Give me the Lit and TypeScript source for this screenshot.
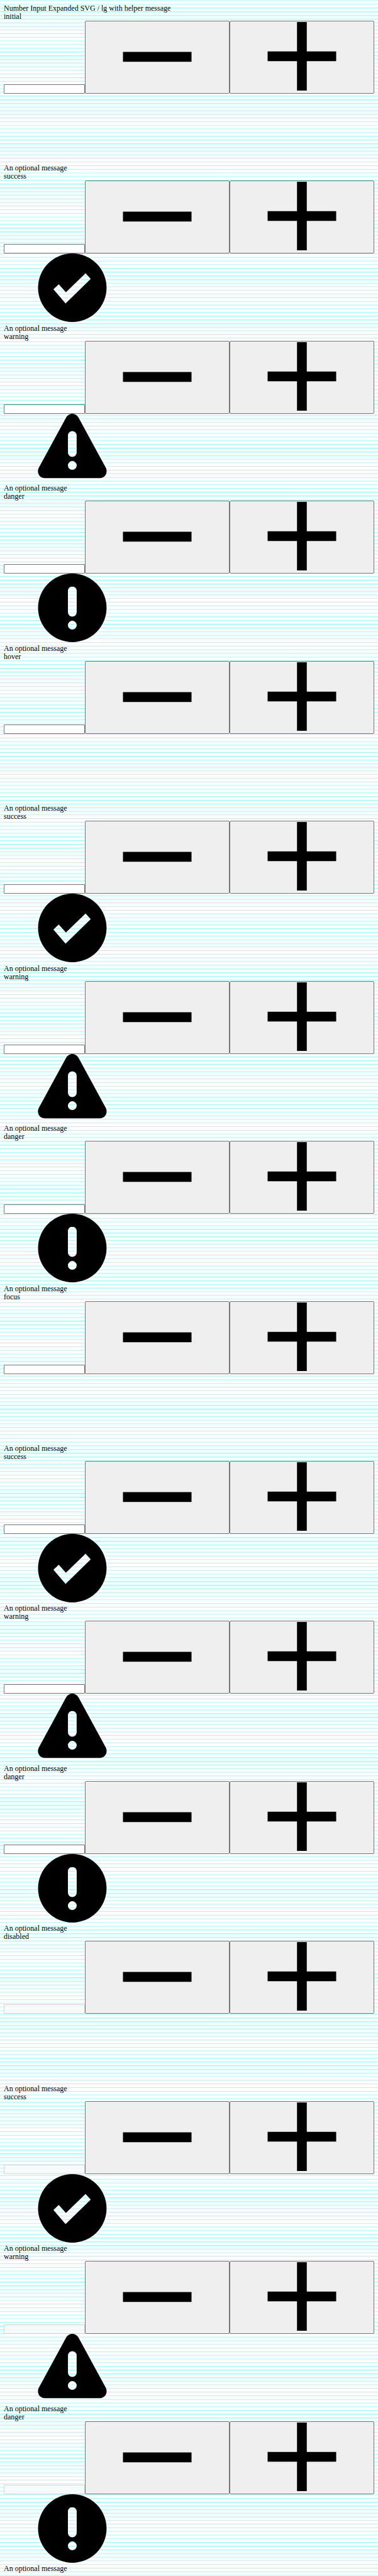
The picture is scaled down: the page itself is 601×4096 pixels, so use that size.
import { LitElement, html, css, svg, nothing } from "lit";
import { customElement, property } from "lit/decorators.js";

type Status = "none" | "success" | "warning" | "danger";

const statusShapes = {
  none: nothing,
  success: svg`<path fill-rule="evenodd" d="M150 0a75 75 0 1 1 0 150a75 75 0 1 1 0-150zM108.7 78.6L135.3 109.6L190.3 55.6L179 43.3L136 85L120.3 67.3z"/>`,
  warning: svg`<path fill-rule="evenodd" d="M150 0C156 0 161 3.500 164 9L223 117.500C229 129 221.500 140.700 210.500 140.700H89.500C78.500 140.700 71 129 77 117.500L136 9C139 3.500 144 0 150 0zM150 37.700a9.500 9.500 0 0 0-9.500 9.500v37.700a9.500 9.500 0 0 0 19 0v-37.700a9.500 9.500 0 0 0-9.500-9.500zM150 103.400a9.600 9.600 0 1 0 0 19.200a9.600 9.600 0 1 0 0-19.200z"/>`,
  danger: svg`<path fill-rule="evenodd" d="M150 0a75 75 0 1 1 0 150a75 75 0 1 1 0-150zM150 28.200a9.600 9.600 0 0 0-9.600 9.600v46.900a9.600 9.600 0 0 0 19.200 0v-46.900a9.600 9.600 0 0 0-9.600-9.600zM150 103.400a9.600 9.600 0 1 0 0 19.200a9.600 9.600 0 1 0 0-19.200z"/>`,
};

@customElement("number-field")
class NumberField extends LitElement {
  static styles = css`
    :host {
      display: grid;
      grid-template-rows: auto auto 1fr auto;
    }
    .label,
    .message {
      display: block;
      line-height: 13px;
    }
    .controls {
      display: grid;
      grid-template-columns: 129fr 230fr 230fr;
      align-items: end;
    }
    .value {
      box-sizing: border-box;
      width: 100%;
      min-width: 0;
      height: 15px;
      margin: 0;
      padding: 0 2px;
      border: 1px solid #767676;
      border-radius: 1px;
      background: #fff;
      font: 10px "Liberation Sans", sans-serif;
      outline: none;
    }
    .value:disabled {
      border-color: rgba(118, 118, 118, 0.3);
      background: rgba(255, 255, 255, 0.7) linear-gradient(rgba(239, 239, 239, 0.3), rgba(239, 239, 239, 0.3));
    }
    .step {
      display: block;
      min-width: 0;
      margin: 0;
      padding: 1px 5px 4px;
      border: 1px solid #767676;
      border-radius: 2px;
      background: #efefef;
      color: #000;
    }
    .glyph,
    .status {
      display: block;
      width: 100%;
      aspect-ratio: 2 / 1;
      fill: currentColor;
    }
    .status {
      width: 37%;
    }
  `;

  @property() label = "";
  @property() status: Status = "none";
  @property({ type: Boolean }) disabled = false;

  render() {
    return html`
      <label class="label" for="value">${this.label}</label>
      <div class="controls">
        <input class="value" id="value" type="text" inputmode="numeric" aria-describedby="message" ?disabled=${this.disabled} />
        <button class="step" type="button" aria-label="Decrease">
          <svg class="glyph" viewBox="0 0 300 150" aria-hidden="true">
            <rect x="75" y="65.4" width="150" height="21.6" />
          </svg>
        </button>
        <button class="step" type="button" aria-label="Increase">
          <svg class="glyph" viewBox="0 0 300 150" aria-hidden="true">
            <path d="M139.300 0h21.400v64.300H225v21.400h-64.300V150h-21.400V85.700H75V64.300h64.300z" />
          </svg>
        </button>
      </div>
      <svg class="status" viewBox="0 0 300 150" aria-hidden="true">${statusShapes[this.status]}</svg>
      <span class="message" id="message">An optional message</span>
    `;
  }
}

const states = ["initial", "hover", "focus", "disabled"];
const statuses: Status[] = ["none", "success", "warning", "danger"];

@customElement("app-root")
class AppRoot extends LitElement {
  static styles = css`
    :host {
      display: block;
      --rhythm: 0.9704vw;
    }
    .page {
      box-sizing: border-box;
      display: grid;
      grid-template-rows: auto repeat(16, 1fr);
      min-height: 100vh;
      padding: 7px 6px 5px;
      color: #000;
      font: 12px/13px "Liberation Serif", serif;
      background: #fff
        repeating-linear-gradient(
          to bottom,
          rgba(0, 255, 255, 0) 0,
          rgba(0, 255, 255, 0.4) 1px,
          rgba(0, 255, 255, 0) 2px,
          rgba(0, 255, 255, 0) var(--rhythm)
        );
    }
    .title {
      margin: 0;
      font: inherit;
    }
  `;

  render() {
    return html`
      <main class="page">
        <h1 class="title">Number Input Expanded SVG / lg with helper message</h1>
        ${states.map((state) =>
          statuses.map(
            (status) => html`<number-field
              .label=${status === "none" ? state : status}
              .status=${status}
              .disabled=${state === "disabled"}
            ></number-field>`
          )
        )}
      </main>
    `;
  }
}
